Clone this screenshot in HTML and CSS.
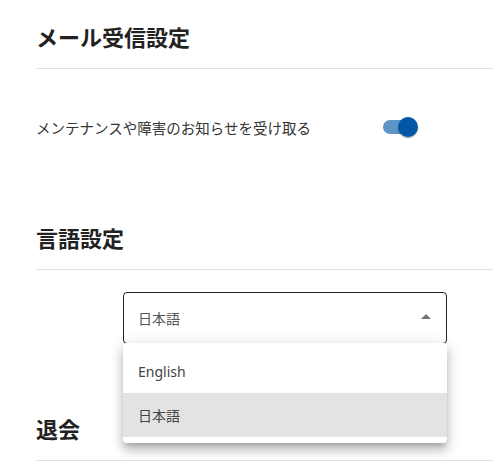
FILE: index.html
```html
<!DOCTYPE html>
<html lang="ja">
<head>
<meta charset="utf-8">
<link rel="stylesheet" href="styles.css">
</head>
<body>
<main class="page">
  <section class="section">
    <h2 class="title">メール受信設定</h2>
    <div class="row">
      <span class="label">メンテナンスや障害のお知らせを受け取る</span>
      <span class="switch">
        <span class="track"></span>
        <span class="thumb"></span>
      </span>
    </div>
  </section>
  <section class="section lang">
    <h2 class="title">言語設定</h2>
    <div class="select-wrap">
      <div class="select">
        <span class="value">日本語</span>
        <span class="arrow"></span>
      </div>
      <ul class="menu">
        <li class="item">English</li>
        <li class="item selected">日本語</li>
      </ul>
    </div>
  </section>
  <section class="section quit">
    <h2 class="title">退会</h2>
  </section>
</main>
</body>
</html>
```
FILE: styles.css
```css
html, body {
  margin: 0;
  padding: 0;
  background: #fff;
}
body {
  font-family: "Noto Sans", "Noto Sans CJK JP", sans-serif;
  color: #333;
}
.page {
  padding-left: 36px;
}
.title {
  margin: 0;
  font-family: "Noto Sans CJK JP", sans-serif;
  font-size: 22px;
  line-height: 28px;
  font-weight: 700;
  color: #222;
  border-bottom: 1px solid #e0e0e0;
  padding-bottom: 18px;
}
.section:first-child .title {
  padding-top: 22px;
}
.row {
  display: flex;
  align-items: center;
  height: 40px;
  margin-top: 38px;
}
.label {
  width: 347px;
  font-size: 14.5px;
  color: #333;
}
.switch {
  position: relative;
  width: 34px;
  height: 20px;
  display: inline-block;
}
.track {
  position: absolute;
  left: 0;
  top: 3px;
  width: 34px;
  height: 14px;
  border-radius: 7px;
  background: #5f94c6;
}
.thumb {
  position: absolute;
  left: 15px;
  top: 0;
  width: 20px;
  height: 20px;
  border-radius: 50%;
  background: #0057a6;
  box-shadow: 0 2px 1px -1px rgba(0,0,0,.2), 0 1px 1px 0 rgba(0,0,0,.14), 0 1px 3px 0 rgba(0,0,0,.12);
}
.lang {
  margin-top: 76px;
}
.select-wrap {
  position: relative;
  margin: 22px 0 0 87px;
  width: 324px;
}
.select {
  box-sizing: border-box;
  height: 52px;
  border: 1px solid #222;
  border-radius: 4px;
  display: flex;
  align-items: center;
  justify-content: space-between;
  padding: 0 15px 0 14px;
}
.value {
  font-size: 14px;
  color: #555;
}
.arrow {
  width: 0;
  height: 0;
  border-left: 5px solid transparent;
  border-right: 5px solid transparent;
  border-bottom: 5px solid #757575;
  margin-top: -4px;
}
.menu {
  position: absolute;
  left: 0;
  top: 51px;
  width: 324px;
  margin: 0;
  padding: 6px 0;
  list-style: none;
  background: #fff;
  border-radius: 4px;
  box-shadow: 0 5px 5px -3px rgba(0,0,0,.2), 0 8px 10px 1px rgba(0,0,0,.14), 0 3px 14px 2px rgba(0,0,0,.12);
  z-index: 2;
}
.item {
  height: 44px;
  display: flex;
  align-items: center;
  padding-left: 15px;
  font-size: 14px;
  color: #444;
}
.item.selected {
  background: #e3e3e3;
}
.quit {
  margin-top: 70px;
}
```
